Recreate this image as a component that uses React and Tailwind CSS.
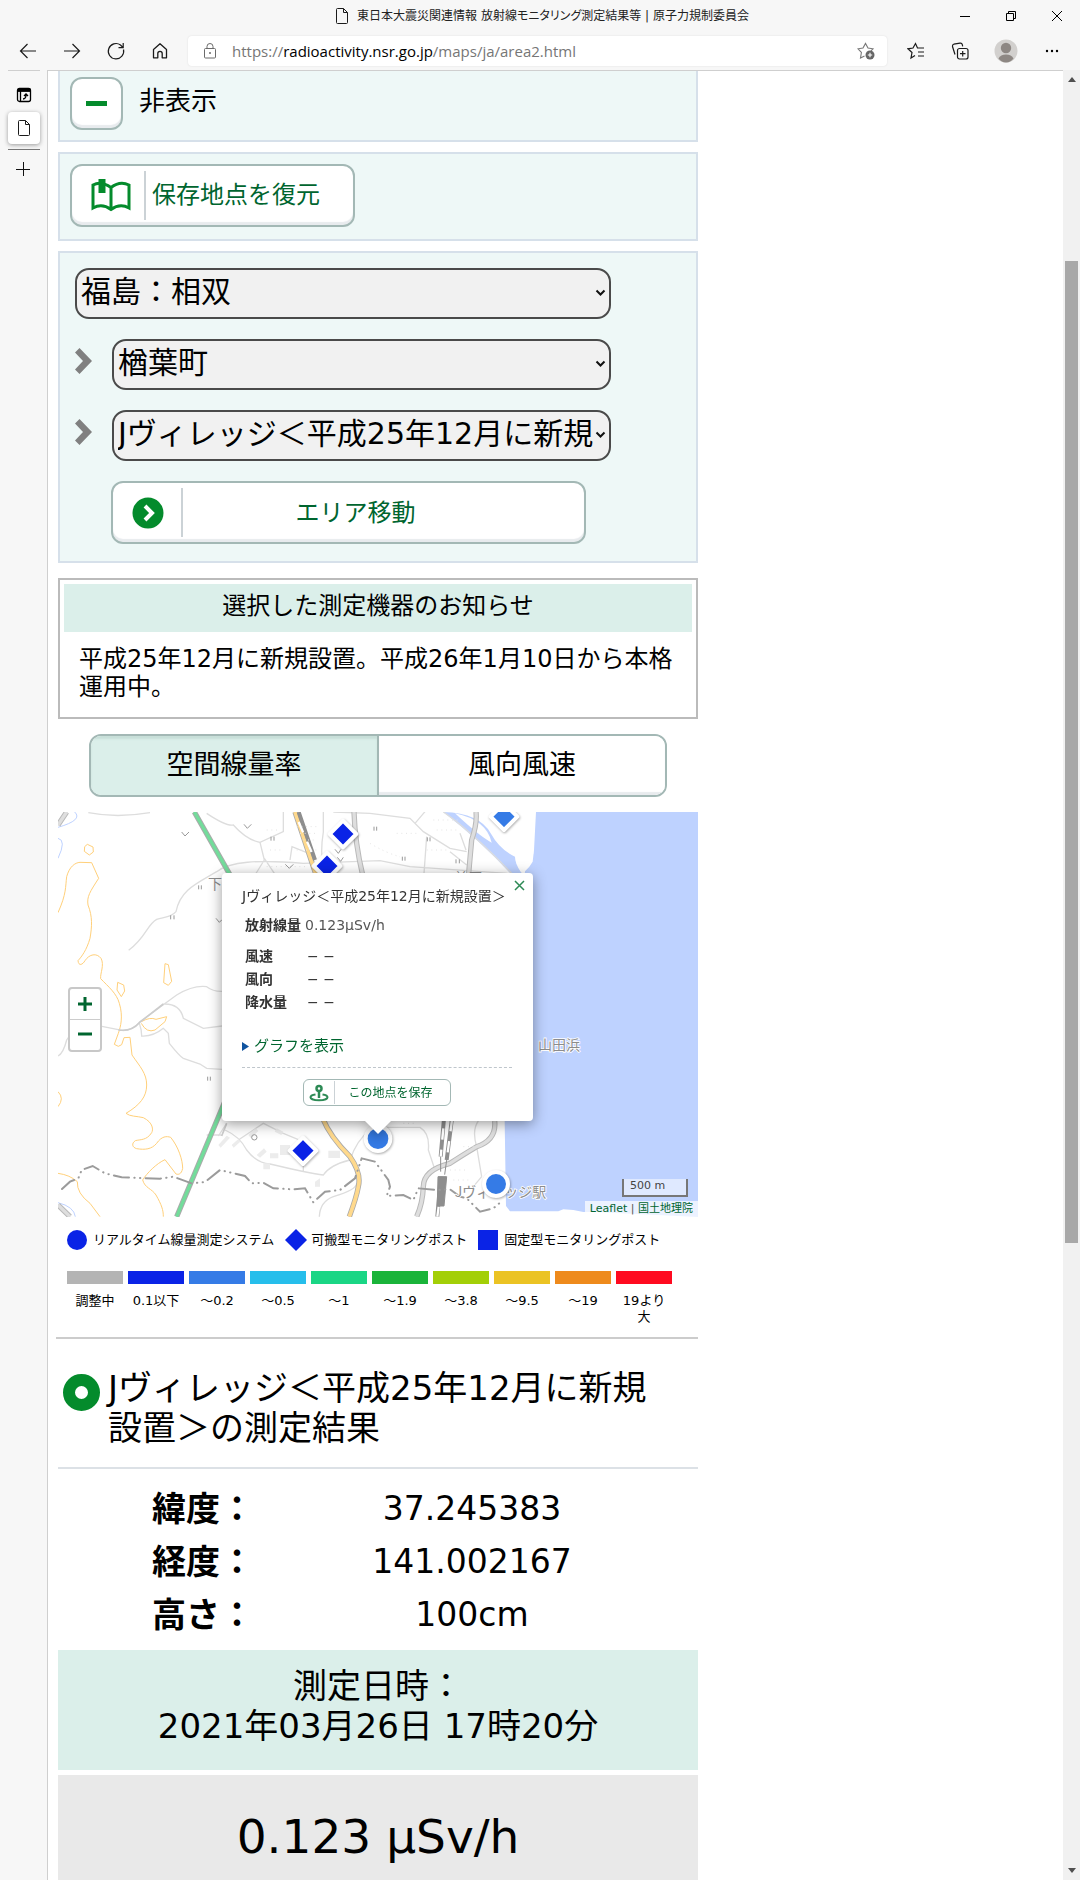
const ICON = 'shrink-0 text-[#1b1b1b]'

const LEVELS = [
  { label: '調整中', color: 'bg-[#b4b4b4]' },
  { label: '0.1以下', color: 'bg-[#0a23e6]' },
  { label: '～0.2', color: 'bg-[#357be6]' },
  { label: '～0.5', color: 'bg-[#26beeb]' },
  { label: '～1', color: 'bg-[#1ad685]' },
  { label: '～1.9', color: 'bg-[#1ab43a]' },
  { label: '～3.8', color: 'bg-[#a3cf07]' },
  { label: '～9.5', color: 'bg-[#ebc324]' },
  { label: '～19', color: 'bg-[#ee8a1c]' },
  { label: '19より大', color: 'bg-[#ff0a20]' },
]

const POSITION = [
  ['緯度：', '37.245383'],
  ['経度：', '141.002167'],
  ['高さ：', '100cm'],
]

function FileIcon() {
  return (
    <svg className={ICON} width="14" height="18" viewBox="0 0 14 18" fill="none" stroke="currentColor">
      <path d="M1.5 2.5a1 1 0 0 1 1-1h6l4 4v10a1 1 0 0 1-1 1h-9a1 1 0 0 1-1-1zM8.5 1.5v4h4" />
    </svg>
  )
}

function TitleBar() {
  return (
    <header className="flex h-8 items-center">
      <div className="flex flex-1 items-center justify-center gap-2 pl-[130px]">
        <FileIcon />
        <h1 className="text-xs text-[#222] [font-feature-settings:'palt']">
          東日本大震災関連情報 放射線モニタリング測定結果等 | 原子力規制委員会
        </h1>
      </div>
      <div className="flex items-center gap-6 pr-3">
        <button aria-label="最小化" className="flex w-[22px] justify-center">
          <svg width="12" height="12" viewBox="0 0 12 12" stroke="#000"><path d="M1 6.5h10" /></svg>
        </button>
        <button aria-label="元に戻す" className="flex w-[22px] justify-center">
          <svg width="12" height="12" viewBox="0 0 12 12" fill="none" stroke="#000">
            <path d="M1.5 3.5h7v7h-7zM3.5 3.5v-2h7v7h-2" />
          </svg>
        </button>
        <button aria-label="閉じる" className="flex w-[22px] justify-center">
          <svg width="12" height="12" viewBox="0 0 12 12" stroke="#000"><path d="M1 1l10 10M11 1L1 11" /></svg>
        </button>
      </div>
    </header>
  )
}

function Toolbar() {
  return (
    <nav className="flex h-[38px] items-center pl-[18px] pr-[21px]">
      <div className="flex items-center gap-6">
        <button aria-label="戻る">
          <svg className={ICON} width="20" height="20" viewBox="0 0 20 20" fill="none" stroke="currentColor" strokeWidth="1.2">
            <path d="M18 10H2.5M9.5 3L2.5 10l7 7" />
          </svg>
        </button>
        <button aria-label="進む">
          <svg className={ICON} width="20" height="20" viewBox="0 0 20 20" fill="none" stroke="currentColor" strokeWidth="1.2">
            <path d="M2 10h15.5M10.5 3l7 7-7 7" />
          </svg>
        </button>
        <button aria-label="更新">
          <svg className={ICON} width="20" height="20" viewBox="0 0 20 20" fill="none" stroke="currentColor" strokeWidth="1.2">
            <path d="M17.5 8.500A7.700 7.700 0 1 1 14.500 4L17 6.500M17.200 2v4.700h-4.700" />
          </svg>
        </button>
        <button aria-label="ホーム">
          <svg className={ICON} width="20" height="20" viewBox="0 0 20 20" fill="none" stroke="currentColor" strokeWidth="1.3">
            <path d="M3.500 8.600L10 2.800l6.500 5.800v8.200h-4.300v-4.300a2.200 2.200 0 0 0-4.400 0v4.300H3.500z" strokeLinejoin="round" />
          </svg>
        </button>
      </div>
      <div className="ml-[18px] flex h-[30px] flex-1 items-center rounded bg-white px-4 shadow-[0_0_2px_#ddd]">
        <svg className="shrink-0" width="12" height="16" viewBox="0 0 12 16" fill="none" stroke="#6b6b6b">
          <rect x=".5" y="5.5" width="11" height="9.5" rx="1" />
          <path d="M3 5.500V3.500a3 3 0 0 1 6 0v2" />
          <circle cx="6" cy="10" r=".6" fill="#6b6b6b" />
        </svg>
        <p className="ml-4 flex-1 font-['Open_Sans'] text-[15px] text-[#767676]">
          https://<span className="text-black">radioactivity.nsr.go.jp</span>/maps/ja/area2.html
        </p>
        <button aria-label="お気に入りに追加" className="-mr-1">
          <svg width="18" height="18" viewBox="0 0 18 18" fill="none" stroke="#777" strokeWidth="1.1">
            <path d="M7.500 14l-4 2 .9-5.500L1 6.800l5-.8L8.500 1.500 11 6l5 .8-2 2" />
            <circle cx="13" cy="13" r="4.5" fill="#666" stroke="none" />
            <path d="M13 10.800v4.400M10.800 13h4.400" stroke="#fff" />
          </svg>
        </button>
      </div>
      <div className="flex items-center pl-5">
        <button aria-label="お気に入り" className="mr-[26px]">
          <svg className={ICON} width="18" height="18" viewBox="0 0 18 18" fill="none" stroke="currentColor" strokeWidth="1.2">
            <path d="M8 13.500l-4 2.500 1-5.500L1 6.800l5-.8 2.500-4.500L10.500 6H17M11 10h6M11 14h6" />
          </svg>
        </button>
        <button aria-label="コレクション" className="mr-[25px]">
          <svg className={ICON} width="18" height="18" viewBox="0 0 18 18" fill="none" stroke="currentColor" strokeWidth="1.2">
            <rect x="6.5" y="6.5" width="10.5" height="10.5" rx="2" />
            <path d="M11.700 9v5.500M9 11.700h5.500M4 12.500L1.500 4.500a2 2 0 0 1 1.300-2.300L9 1.200a2 2 0 0 1 2.300 1.500l.4 1.600" />
          </svg>
        </button>
        <button aria-label="プロフィール" className="mr-[27px]">
          <svg width="24" height="24" viewBox="0 0 24 24">
            <circle cx="12" cy="12" r="11.5" fill="#d2d0ce" />
            <circle cx="12" cy="9" r="5.2" fill="#8d8783" />
            <path d="M4.500 19.500q2-4 7.500-4t7.500 4q-3 4-7.500 4t-7.500-4z" fill="#8d8783" />
          </svg>
        </button>
        <button aria-label="設定など">
          <svg width="14" height="4" viewBox="0 0 14 4"><circle cx="2" cy="2" r="1.2" /><circle cx="7" cy="2" r="1.2" /><circle cx="12" cy="2" r="1.2" /></svg>
        </button>
      </div>
    </nav>
  )
}

function TabStrip() {
  return (
    <aside className="flex w-12 shrink-0 flex-col items-center border-r border-[#cfcfcf]">
      <hr className="w-8 border-[#cfcfcf]" />
      <button aria-label="タブ操作メニュー" className="mt-[15px] flex h-[18px] items-center">
        <svg width="16" height="16" viewBox="0 0 16 16" fill="none" stroke="#000" strokeWidth="1.3">
          <rect x="1.5" y="1.5" width="13" height="13" rx="2" />
          <path d="M1.500 3.200h13" strokeWidth="3.4" />
          <path d="M4.500 4v10.500M7 12q3 0 3-4.500M8 9l2-2 2 2" />
        </svg>
      </button>
      <button aria-label="現在のタブ" className="mt-2 flex h-8 w-8 items-center justify-center rounded bg-white shadow-[0_1px_4px_#999]">
        <FileIcon />
      </button>
      <hr className="mt-[5px] w-8 border-[#777]" />
      <button aria-label="新しいタブ" className="mr-0.5 mt-3">
        <svg width="14" height="14" viewBox="0 0 14 14" stroke="#111"><path d="M7.500 0v14M0 7.500h14" /></svg>
      </button>
    </aside>
  )
}

function ScrollBar() {
  return (
    <div className="flex w-[17px] shrink-0 flex-col items-center justify-between bg-[#f1f1f1] py-[7px]">
      <svg width="8" height="5" viewBox="0 0 8 5"><path d="M4 0l4 5H0z" fill="#505050" /></svg>
      <div className="flex w-full flex-1 flex-col items-center">
        <div className="h-[10%]" />
        <div className="h-[55%] w-[13px] bg-[#a8a8a8]" />
      </div>
      <svg width="8" height="5" viewBox="0 0 8 5"><path d="M4 5l4-5H0z" fill="#505050" /></svg>
    </div>
  )
}

function Select({ label, value, arrow }) {
  return (
    <div className={arrow ? 'mt-5 flex items-center' : 'flex items-center'}>
      {arrow && (
        <svg className="-mt-2 mr-5 shrink-0" width="17" height="26" viewBox="0 0 17 26">
          <path d="M4.500 0L17 13 4.500 26 0 21.500 8 13 0 4.500z" fill="#808080" />
        </svg>
      )}
      <div className="relative min-w-0 flex-1">
        <select
          aria-label={label}
          className="block h-[51px] w-full appearance-none overflow-hidden rounded-[14px] border-2 border-[#4a4a4a] bg-[#f1f1f1] pb-1 pl-1 pr-4 text-[30px] leading-10 text-black"
        >
          <option>{value}</option>
        </select>
        <svg className="pointer-events-none absolute right-[5px] top-[21px]" width="11" height="8" viewBox="0 0 11 8" fill="none" stroke="#111" strokeWidth="2">
          <path d="M1.500 1.500l4 4 4-4" />
        </svg>
      </div>
    </div>
  )
}

const BUTTON = 'flex items-center border-2 border-[#a3b8b5] bg-white rounded-xl shadow-[inset_0_-3px_1px_#e8ebee] text-[#00652f]'

function AreaPanel() {
  return (
    <section className="mt-[10px] border-2 border-[#d6e0ea] bg-[#eef8f7] px-[15px] pb-[17px] pt-[15px]">
      <div className="max-w-[536px]">
        <Select label="エリア" value="福島：相双" />
        <Select label="市町村" value="楢葉町" arrow />
        <Select label="測定地点" value="Jヴィレッジ＜平成25年12月に新規設置＞" arrow />
      </div>
      <button className={`${BUTTON} ml-9 mt-5 h-[63px] w-full max-w-[475px] text-2xl`}>
        <span className="flex w-[68px] shrink-0 justify-center pl-0.5">
          <svg width="32" height="32" viewBox="0 0 32 32">
            <circle cx="16" cy="16" r="15.5" fill="#048b2c" />
            <path d="M13 9l7 7-7 7" fill="none" stroke="#fff" strokeWidth="4" />
          </svg>
        </span>
        <span className="h-[49px] w-0.5 bg-[#cbd2d6]" />
        <span className="flex-1 pr-14">エリア移動</span>
      </button>
    </section>
  )
}

function Notice() {
  return (
    <section className="mt-[15px] border-2 border-[#bbb] p-1 pb-4">
      <h2 className="h-12 bg-[#dbefea] text-center text-2xl leading-[44px]">選択した測定機器のお知らせ</h2>
      <p className="pl-[15px] pr-3 pt-[13px] text-2xl leading-7">
        平成25年12月に新規設置。平成26年1月10日から本格運用中。
      </p>
    </section>
  )
}

function MapDrawing() {
  return (
    <svg className="block h-full w-full" viewBox="24 36 1920 1215" preserveAspectRatio="xMidYMid slice" fill="none">
      <rect x="24" y="36" width="1920" height="1215" fill="#fff" />
      {/* sea and river */}
      <path d="M1458 36L1452 150 1448 185 1438 200 1425 214 1408 400 1370 800 1364 963 1368 1218 1380 1234 1525 1234 1540 1228 1570 1230 1600 1236H1640L1944 1251V36z" fill="#bed2ff" />
      <path d="M1180 36Q1290 40 1322 100 1350 150 1395 170 1395 190 1412 215L1425 230H1390Q1300 130 1180 36z" fill="#bed2ff" />
      <path d="M1215 40Q1310 60 1325 128 1290 110 1215 40z" fill="#fff" />
      <path d="M1397 172L1400 190 1424 204 1440 190 1450 160V60L1380 90z" fill="#fff" />
      <path d="M24 82Q100 60 74 36M24 115Q50 120 24 175M24 1208Q72 1220 76 1250" stroke="#bed2ff" strokeWidth="3" />
      {/* contours */}
      <g stroke="#ffd07a" strokeWidth="3">
        <path d="M104 140l8-7 17 8 1 15-12 9-15-11zM24 338C50 280 46 260 50 230C58 200 75 188 90 187L125 188L146 235C120 275 110 290 114 315C128 350 126 380 120 415C110 450 95 470 84 482C86 500 98 494 105 482C118 462 140 458 153 475C164 495 150 520 152 536C175 560 200 580 208 610C220 650 212 680 205 700L193 733L205 739L215 734L222 713L240 712L246 765C270 800 290 820 290 855C290 890 270 915 228 940C240 950 260 948 280 953C310 968 310 990 305 998C290 1022 270 1018 256 1022C244 1030 246 1042 260 1046C285 1050 305 1048 320 1030C335 1008 350 1008 362 1012C385 1040 398 1080 398 1105C394 1124 385 1124 378 1122L345 1079C320 1090 290 1120 278 1140C285 1165 305 1165 318 1185C335 1215 340 1230 340 1250" />
        <path d="M345 491l10 3 10 50-10 12-14-8zM203 547l18 8 3 18-10 17-13-20zM274 665Q300 650 318 658L350 650 345 665 315 690Q290 700 274 670M24 875q20 20 0 45M24 1120Q60 1125 82 1145 80 1180 120 1210L150 1250" />
      </g>
      {/* minor roads */}
      <g stroke="#ddd" strokeWidth="4">
        <path d="M236 451C290 410 290 375 320 358C350 350 365 350 378 335C390 270 440 250 500 215C540 185 620 178 760 190L990 182L1080 200L1370 220M115 38Q200 55 300 38M470 40Q530 80 550 75 590 120 630 127L700 95V36M630 127L643 180 615 225M643 175l30 45M720 180l6-40 50 20M820 36v60q-10 60 0 110M850 36l110 4 120 15 40 40 80 50 50 10M1130 110l-8 110M1095 70l30-35M1180 36Q1260 90 1385 220M1230 100l18 50M1200 155l50 40" />
        <path d="M24 768Q40 760 50 720 80 670 110 675M110 670L220 692Q250 690 270 665L380 585Q430 555 470 560 490 575 516 574M268 670Q275 690 275 708 310 710 340 685L355 700 358 730Q390 770 400 775L450 792 470 805 516 808M340 612Q390 610 400 655L460 685 516 678" />
        <path d="M505 1008L530 970M525 990Q570 1010 590 1050 620 1090 660 1092 780 1120 820 1125 840 1095 900 1080 920 1020 960 990M565 1020L640 970 700 1000 760 1025V1115M470 1005h45M1000 982h110Q1140 1000 1135 1050L1155 1110M1285 963Q1265 990 1280 1040L1295 1130M920 1150Q920 1170 850 1190 810 1205 808 1250M1295 1130l-25 30" />
      </g>
      <g stroke="#ccc" strokeWidth="5"><path d="M340 612L268 668Q245 695 205 690M530 970L515 1008" /></g>
      {/* trunk roads */}
      <g stroke="#b9b9b9" strokeWidth="16">
        <path d="M1278 36Q1282 70 1265 120L1256 220M912 36Q915 130 938 225M1334 963Q1340 1020 1280 1040 1230 1070 1200 1090 1120 1110 1120 1160 1118 1210 1100 1250M24 75L50 36M24 1215L60 1250" />
      </g>
      <g stroke="#dedede" strokeWidth="10">
        <path d="M1278 36Q1282 70 1265 120L1256 220M912 36Q915 130 938 225M1334 963Q1340 1020 1280 1040 1230 1070 1200 1090 1120 1110 1120 1160 1118 1210 1100 1250M24 75L50 36M24 1215L60 1250" />
      </g>
      <g stroke="#aaa" strokeWidth="16"><path d="M433 36L560 260M560 820L380 1250M735 36L800 230M818 955Q840 1010 900 1070 935 1120 925 1160 920 1190 898 1250" /></g>
      <path d="M433 36L560 260M560 820L380 1250" stroke="#73dc9b" strokeWidth="10" />
      <path d="M735 36L800 230M818 955Q840 1010 900 1070 935 1120 925 1160 920 1190 898 1250" stroke="#ffd98c" strokeWidth="11" />
      {/* railway */}
      <g stroke="#8e8e8e" strokeWidth="12"><path d="M746 36L795 180M1182 955L1172 1070M1206 955L1190 1080M1172 1130L1162 1250" /></g>
      <g stroke="#fff" strokeWidth="7" strokeDasharray="34 30"><path d="M746 66L795 180M1180 985L1172 1070M1206 960L1190 1080M1166 1220L1162 1250" /></g>
      <path d="M1164 1130h26l-8 88h-20zM1172 1070v45M1190 1080l-6 44" fill="#8e8e8e" stroke="#8e8e8e" strokeWidth="3" />
      {/* houses */}
      <path d="M505 1035l25-28 10 6-28 30zM545 1035l20-18 6 8-20 18zM595 1005l22-20 8 8-22 22zM620 1065l22-20 8 10-20 18zM660 1060h25v15h-25zM690 1035h30v30h-30zM640 1090h20v18h-20zM835 1052h35v22h-35zM795 1145l15-10v25h-15zM680 985l20 10-6 10-20-10z" fill="#ececec" />
      <g stroke="#e4e4e4" strokeWidth="3" strokeDasharray="3 11">
        <path d="M740 80h65M750 100h50M760 120h40M740 150h60M850 90h50M860 130h40M650 90h40M660 150h40M650 200h120M960 130q50 30 90 40M1040 100h60M1150 60h80M1160 90h60M1130 150h60M1200 1110h50M1210 1140h50M1240 1040h40M1060 970h40" />
      </g>
      {/* boundary */}
      <path d="M36 1167L60 1145 85 1135 95 1110 128 1098 165 1120 215 1132 330 1136 370 1130 425 1150 465 1146 510 1110 585 1128 605 1150 640 1148 670 1165 730 1168 765 1165 790 1207 825 1175 870 1170 915 1135 935 1075 975 1085 1015 1140 1020 1160 1010 1188 1060 1185 1090 1200 1105 1165 1160 1170 1200 1168 1230 1190 1250 1195 1290 1235 1330 1225 1350 1208" stroke="#9b9b9b" strokeWidth="6" strokeDasharray="46 16 1 16 1 16" strokeLinecap="round" />
      {/* land use marks */}
      <g stroke="#999" strokeWidth="3">
        <path d="M395 96l10 12 12-12M582 73l10 12 12-12M706 193l12 12 12-12M498 355l10 12 8-8M855 148l10 12 8-12M862 172l10 12 8-12M446 256v12M454 256v12M362 346v12M372 346v12M473 830v12M481 830v12M663 110v12M672 110v12M972 80v12M980 80v12M1057 170v12M1065 170v12M1132 112v12M1140 112v12M1218 178v12M1228 178v12" />
        <circle cx="613" cy="1012" r="8" />
      </g>
      <g fill="#8c8c8c" fontSize="42" className="font-['Noto_Sans_CJK_JP']">
        <text x="474" y="268">下</text>
        <text x="1212" y="249">前原</text>
        <text x="1464" y="750" stroke="#fff" strokeWidth="5" paintOrder="stroke">山田浜</text>
        <text x="1214" y="1190" stroke="#fff" strokeWidth="5" paintOrder="stroke">Jヴィレッジ駅</text>
      </g>
      {/* monitoring posts */}
      <g stroke="#fff" strokeWidth="12" strokeLinejoin="round" className="drop-shadow-[2px_3px_3px_#0005]">
        <path d="M879 62l40 40-40 40-40-40zM831 158l40 40-40 40-40-40zM759 1012l40 40-40 40-40-40z" fill="#0a23e6" />
        <path d="M1362 10l40 40-40 40-40-40z" fill="#357be6" />
        <circle cx="984" cy="1016" r="37" fill="#357be6" />
        <circle cx="1338" cy="1152" r="36" fill="#357be6" />
      </g>
    </svg>
  )
}

function Popup() {
  return (
    <div className="absolute left-[164px] top-[61px] w-[311px] drop-shadow-[0_3px_7px_#0006]">
      <div className="h-[248px] rounded-sm bg-white pl-5 pr-[21px] pt-[13px] text-sm text-[#333]">
        <button aria-label="閉じる" className="absolute right-2 top-[7px]">
          <svg width="11" height="11" viewBox="0 0 11 11" stroke="#2d8a55" strokeWidth="1.5"><path d="M1 1l9 9M10 1l-9 9" /></svg>
        </button>
        <h3 className="whitespace-nowrap leading-5">Jヴィレッジ＜平成25年12月に新規設置＞</h3>
        <p className="ml-[3px] mt-[7px] flex gap-1 leading-6"><b>放射線量</b><span className="text-[#555]">0.123µSv/h</span></p>
        <table className="ml-[3px] mt-2 text-left leading-[23px]">
          <tbody>
            {['風速', '風向', '降水量'].map((name) => (
              <tr key={name}>
                <th className="w-[62px] p-0">{name}</th>
                <td className="p-0">− −</td>
              </tr>
            ))}
          </tbody>
        </table>
        <a href="#graph" className="mt-5 flex items-center gap-[5px] text-[15px] leading-6 text-[#00652f]">
          <svg width="7" height="9" viewBox="0 0 7 9"><path d="M0 0l7 4.500L0 9z" fill="#1054a0" /></svg>
          グラフを表示
        </a>
        <hr className="mt-[9px] border-dashed border-[#bfc6cc]" />
        <button className="mx-auto mt-[11px] flex h-[27px] w-[148px] items-center rounded-md border border-[#a3b8b5] text-xs text-[#00652f]">
          <span className="flex w-[30px] justify-center">
            <svg width="20" height="18" viewBox="0 0 20 18" fill="none" stroke="#2d8a55">
              <path d="M6.500 10.500C3 11 1.500 12 1.500 13.300c0 1.600 3.700 3 8.500 3s8.500-1.400 8.500-3c0-1.300-1.500-2.300-5-2.800" strokeWidth="2" />
              <path d="M10 14V7" strokeWidth="2.5" />
              <circle cx="10" cy="4.5" r="2.5" strokeWidth="2.5" />
            </svg>
          </span>
          <span className="h-[23px] w-px bg-[#cbd2d6]" />
          <span className="flex-1 pr-1">この地点を保存</span>
        </button>
      </div>
      <svg className="mx-auto block" width="26" height="13" viewBox="0 0 26 13"><path d="M0 0h26L13 13z" fill="#fff" /></svg>
    </div>
  )
}

function MonitoringMap() {
  return (
    <div className="relative mt-[15px] h-[405px] overflow-hidden">
      <MapDrawing />
      <div className="absolute left-[10px] top-[175px] flex w-[34px] flex-col divide-y divide-[#ccc] rounded border-2 border-[#c8c8c8] bg-white">
        <button aria-label="拡大" className="flex h-[31px] items-center justify-center">
          <svg width="14" height="14" viewBox="0 0 14 14" stroke="#00652f" strokeWidth="3"><path d="M7 0v14M0 7h14" /></svg>
        </button>
        <button aria-label="縮小" className="flex h-[30px] items-center justify-center">
          <svg width="14" height="14" viewBox="0 0 14 14" stroke="#00652f" strokeWidth="3"><path d="M0 6h14" /></svg>
        </button>
      </div>
      <Popup />
      <div className="absolute bottom-5 right-[10px] h-[18px] w-[66px] border-2 border-t-0 border-[#777] bg-white/50 pl-1.5 text-[11px] leading-[14px] text-[#444]">500 m</div>
      <p className="absolute bottom-0 right-0 bg-white/70 px-[5px] text-[11px] leading-4 text-[#555]">
        <a href="#leaflet" className="text-[#00652f]">Leaflet</a> | <a href="#gsi" className="text-[#00652f]">国土地理院</a>
      </p>
    </div>
  )
}

function Legend() {
  return (
    <section className="-ml-0.5 border-b-2 border-[#ccc] pb-3 pl-[11px] pr-[26px] pt-3 text-[13px]">
      <ul className="flex gap-[11px] whitespace-nowrap leading-5">
        <li className="flex items-center gap-1.5">
          <span className="h-5 w-5 rounded-full bg-[#0a23e6]" />リアルタイム線量測定システム
        </li>
        <li className="flex items-center gap-1">
          <svg width="22" height="22" viewBox="0 0 22 22"><path d="M11 0l11 11-11 11L0 11z" fill="#0a23e6" /></svg>可搬型モニタリングポスト
        </li>
        <li className="flex items-center gap-1.5">
          <span className="h-5 w-5 bg-[#0a23e6]" />固定型モニタリングポスト
        </li>
      </ul>
      <ul className="mt-5 grid grid-cols-10 gap-[5px]">
        {LEVELS.map(({ label, color }) => (
          <li key={label} className="text-center leading-4">
            <div className={`mb-[9px] h-[13px] ${color}`} />
            <span className="block px-[3px]">{label}</span>
          </li>
        ))}
      </ul>
    </section>
  )
}

function Result() {
  return (
    <section className="text-[34px] leading-10">
      <div className="flex gap-2 border-b-2 border-[#dce1e6] pb-[19px] pl-[5px] pr-10 pt-[29px]">
        <svg className="mt-1.5 shrink-0" width="37" height="37" viewBox="0 0 37 37">
          <circle cx="18.5" cy="18.5" r="12.5" fill="none" stroke="#048b2c" strokeWidth="12" />
        </svg>
        <h2>Jヴィレッジ＜平成25年12月に新規設置＞の測定結果</h2>
      </div>
      <table className="mb-[9px] mt-[13px] w-full">
        <tbody>
          {POSITION.map(([name, value]) => (
            <tr key={name} className="h-[53px]">
              <th className="w-[29%] whitespace-nowrap p-0 pl-[94px] text-left">{name}</th>
              <td className="p-0 pr-2 text-center text-[33px]">{value}</td>
            </tr>
          ))}
        </tbody>
      </table>
      <div className="h-[120px] bg-[#dbefea] pt-4 text-center">
        測定日時：<br />2021年03月26日 17時20分
      </div>
      <p className="mt-[5px] bg-[#e9e9e9] pb-10 pt-8 text-center text-[47px] leading-[60px]">0.123 µSv/h</p>
    </section>
  )
}

export default function App() {
  return (
    <div className="flex h-screen flex-col overflow-hidden bg-[#f7f7f7] font-['DejaVu_Sans','Noto_Sans_CJK_JP',sans-serif] text-black">
      <TitleBar />
      <Toolbar />
      <div className="flex min-h-0 flex-1">
        <TabStrip />
        <main className="min-w-0 flex-1 overflow-hidden border-t border-[#cfcfcf] bg-white pl-[10px]">
          <div className="max-w-[640px]">
            <section className="flex items-center gap-4 border-2 border-t-0 border-[#d6e0ea] bg-[#eef8f7] pb-[10px] pl-[10px] pt-1.5">
              <button aria-label="非表示" className={`${BUTTON} h-[53px] w-[53px] justify-center`}>
                <span className="h-[5px] w-[21px] bg-[#048b2c]" />
              </button>
              <span className="pb-1.5 text-[26px] leading-8">非表示</span>
            </section>
            <section className="mt-[10px] border-2 border-[#d6e0ea] bg-[#eef8f7] px-[10px] pb-3 pt-[10px]">
              <button className={`${BUTTON} h-[63px] w-full max-w-[285px] text-2xl`}>
                <span className="flex w-[72px] shrink-0 justify-center pl-1.5">
                  <svg width="40" height="33" viewBox="0 0 40 33" fill="none" stroke="#048b2c" strokeWidth="3">
                    <path d="M20 8.500Q29 1.500 38 6v23q-9-5-18 1.500Q11 24 2 29V6q8-4.500 18 2.500zM20 8.500v22" />
                    <path d="M7.500 0h7v14h-7z" fill="#048b2c" stroke="none" />
                  </svg>
                </span>
                <span className="h-[49px] w-0.5 bg-[#cbd2d6]" />
                <span className="ml-1.5 pb-0.5">保存地点を復元</span>
              </button>
            </section>
            <AreaPanel />
            <Notice />
            <div role="tablist" className="mx-auto mt-[15px] flex h-[63px] max-w-[578px] divide-x-2 divide-[#a3b8b5] overflow-hidden rounded-xl border-2 border-[#a3b8b5] text-[27px]">
              <button role="tab" aria-selected="true" className="flex-1 bg-[#dbefea] shadow-[inset_0_3px_2px_#c8dfd9]">空間線量率</button>
              <button role="tab" aria-selected="false" className="flex-1 bg-white shadow-[inset_0_-3px_1px_#e8ebee]">風向風速</button>
            </div>
            <MonitoringMap />
            <Legend />
            <Result />
          </div>
        </main>
        <ScrollBar />
      </div>
    </div>
  )
}
